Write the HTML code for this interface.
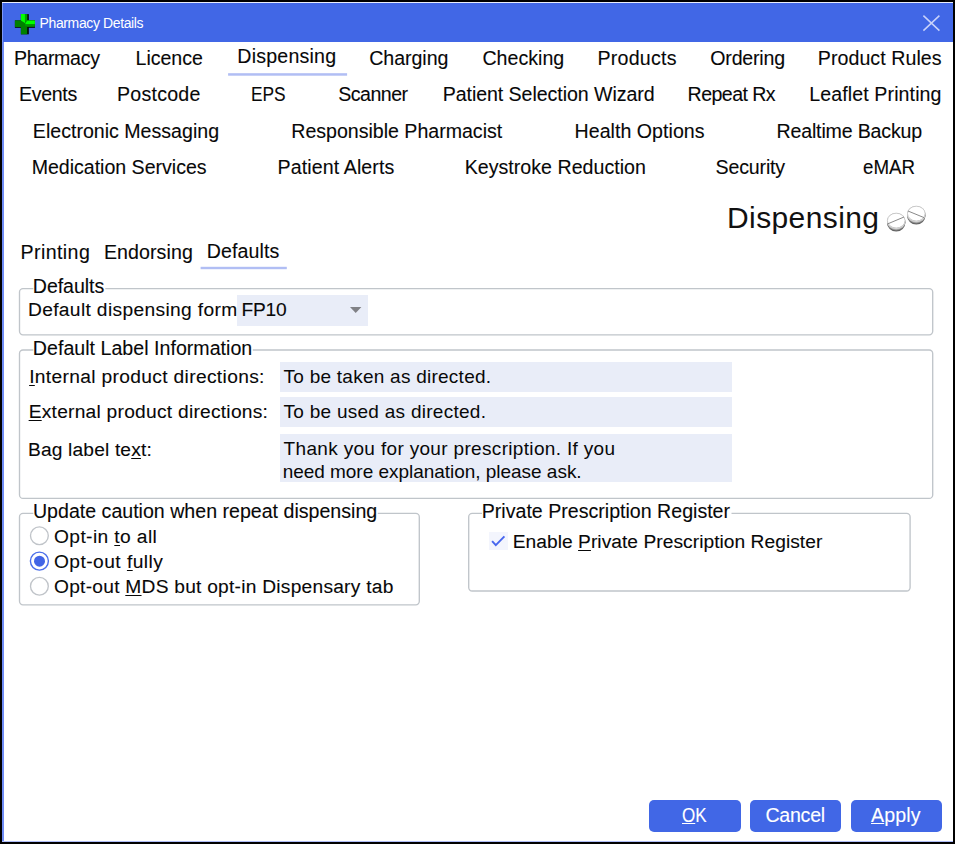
<!DOCTYPE html>
<html lang="en">
<head>
<meta charset="utf-8">
<title>Pharmacy Details</title>
<style>
html,body{margin:0;padding:0;}
body{width:955px;height:844px;overflow:hidden;background:#000;font-family:"Liberation Sans",sans-serif;position:relative;}
.abs{position:absolute;}
#win{position:absolute;left:2px;top:2px;width:951px;height:840px;background:#fff;}
#lb{position:absolute;left:2px;top:2px;width:2px;height:840px;background:#6f8cf5;}
#bb{position:absolute;left:2px;top:841px;width:951px;height:1px;background:#aebcf7;}
#titlebar{position:absolute;left:2px;top:2px;width:951px;height:39.5px;background:#4167e6;border-top:1px solid #e8ecfc;box-sizing:border-box;}
.t{position:absolute;margin:0;font-weight:400;white-space:pre;line-height:1;font-family:"Liberation Sans",sans-serif;-webkit-text-stroke:0.1px currentColor;}
#title,#head,#f1,#f2,#f3,#f4{-webkit-text-stroke:0;}
.t u{text-decoration:underline;text-decoration-thickness:1px;text-underline-offset:2px;}
.btn .t u{text-underline-offset:1px;}
.fld{position:absolute;background:#e9edf8;}
.btn{position:absolute;top:800px;height:31.5px;width:91.5px;margin:0;padding:0;border:0;background:#4167e6;border-radius:5px;font:inherit;text-align:left;overflow:visible;}
</style>
</head>
<body>
<!-- window frame -->
<div id="win"></div>
<div id="lb"></div>
<div id="bb"></div>

<!-- title bar -->
<header>
<div id="titlebar"></div>
<div class="abs" style="left:2px;top:3px;width:1px;height:39px;background:#7d98f6"></div>
<svg class="abs" style="left:12px;top:11px" width="26" height="26" viewBox="12 11 26 26" aria-hidden="true">
  <rect x="20.9" y="14.1" width="7.9" height="20.2" fill="#000800"/>
  <rect x="14.9" y="20.4" width="20.05" height="7.4" fill="#000800"/>
  <rect x="20.9" y="14.1" width="6.3" height="20.2" fill="#008000"/>
  <rect x="14.9" y="20.4" width="20.05" height="6.6" fill="#008000"/>
  <rect x="24.9" y="14.1" width="2.3" height="7.4" fill="#00a000"/>
  <rect x="25.2" y="24" width="9.75" height="1.7" fill="#009c00"/>
  <polygon points="20.9,14.1 24.9,14.1 24.9,21 25.3,23.3 20.9,20.4" fill="#00ff00"/>
  <polygon points="25.3,23.3 27.4,20.4 34.95,20.4 34.95,24.1 25.5,24.1" fill="#00ff00"/>
</svg>
<span class="t" id="title" style="left:39.56px;top:16.15px;font-size:14px;letter-spacing:-0.38px;color:#ffffff">Pharmacy Details</span>
<svg class="abs" style="left:921px;top:13px" width="20" height="20" viewBox="0 0 20 20" role="img" aria-label="Close">
  <path d="M2.4 2.6 L18.4 17.6 M18.4 2.6 L2.4 17.6" stroke="#c9d2fa" stroke-width="1.5" fill="none"/>
</svg>
</header>

<!-- line work: group boxes, selected-tab underlines, radio buttons -->
<svg class="abs" style="left:0;top:0" width="955" height="844" viewBox="0 0 955 844" aria-hidden="true">
  <g fill="none" stroke="#c0c5ca" stroke-width="1.35">
    <rect x="19.5" y="288.6" width="913.2" height="46.2" rx="3.5"/>
    <rect x="19.5" y="350" width="913.2" height="148.4" rx="3.5"/>
    <rect x="19.5" y="513.4" width="399.8" height="91.4" rx="3.5"/>
    <rect x="468.7" y="513.4" width="441.4" height="77.6" rx="3.5"/>
  </g>
  <g fill="#b1bef4">
    <rect x="228.1" y="73.2" width="119" height="2.5"/>
    <rect x="200.6" y="266.8" width="86.2" height="2.4"/>
  </g>
  <g fill="#ffffff">
    <rect x="33.3" y="286" width="72" height="5"/>
    <rect x="33.3" y="347" width="219.5" height="5"/>
    <rect x="33.3" y="511" width="344.5" height="5"/>
    <rect x="482" y="511" width="249.5" height="5"/>
  </g>
  <circle cx="39.4" cy="535.7" r="8.9" fill="#fff" stroke="#c0c4c9" stroke-width="1.35"/>
  <circle cx="39.4" cy="561.1" r="9" fill="#fff" stroke="#4a6eea" stroke-width="1.4"/>
  <circle cx="39.5" cy="561.2" r="5.5" fill="#4265e6"/>
  <circle cx="39.4" cy="586.2" r="8.9" fill="#fff" stroke="#c0c4c9" stroke-width="1.35"/>
</svg>

<!-- main tab strip -->
<nav role="tablist" aria-label="Pharmacy details">
<span class="t" id="t11" role="tab" aria-selected="false" style="left:14.05px;top:49.41px;font-size:19.6px;letter-spacing:-0.33px;color:#080808">Pharmacy</span>
<span class="t" id="t12" role="tab" aria-selected="false" style="left:135.56px;top:49.41px;font-size:19.6px;letter-spacing:-0.04px;color:#080808">Licence</span>
<span class="t" id="t13" role="tab" aria-selected="true" style="left:237.3px;top:47.41px;font-size:19.6px;letter-spacing:0.21px;color:#080808">Dispensing</span>
<span class="t" id="t14" role="tab" aria-selected="false" style="left:369.22px;top:49.41px;font-size:19.6px;letter-spacing:-0.05px;color:#080808">Charging</span>
<span class="t" id="t15" role="tab" aria-selected="false" style="left:482.4px;top:49.41px;font-size:19.6px;letter-spacing:0.02px;color:#080808">Checking</span>
<span class="t" id="t16" role="tab" aria-selected="false" style="left:597.56px;top:49.41px;font-size:19.6px;letter-spacing:0.23px;color:#080808">Products</span>
<span class="t" id="t17" role="tab" aria-selected="false" style="left:710.29px;top:49.41px;font-size:19.6px;letter-spacing:-0.2px;color:#080808">Ordering</span>
<span class="t" id="t18" role="tab" aria-selected="false" style="left:817.79px;top:49.41px;font-size:19.6px;letter-spacing:0.06px;color:#080808">Product Rules</span>
<span class="t" id="t21" role="tab" aria-selected="false" style="left:19.05px;top:85.41px;font-size:19.6px;letter-spacing:-0.35px;color:#080808">Events</span>
<span class="t" id="t22" role="tab" aria-selected="false" style="left:117.05px;top:85.41px;font-size:19.6px;letter-spacing:0.23px;color:#080808">Postcode</span>
<span class="t" id="t23" role="tab" aria-selected="false" style="left:251.36px;top:85.41px;font-size:19.6px;letter-spacing:0px;color:#080808;transform:scaleX(0.883);transform-origin:0 0">EPS</span>
<span class="t" id="t24" role="tab" aria-selected="false" style="left:338.34px;top:85.41px;font-size:19.6px;letter-spacing:-0.55px;color:#080808">Scanner</span>
<span class="t" id="t25" role="tab" aria-selected="false" style="left:442.74px;top:85.41px;font-size:19.6px;letter-spacing:-0.07px;color:#080808">Patient Selection Wizard</span>
<span class="t" id="t26" role="tab" aria-selected="false" style="left:687.61px;top:85.41px;font-size:19.6px;letter-spacing:-0.58px;color:#080808">Repeat Rx</span>
<span class="t" id="t27" role="tab" aria-selected="false" style="left:809.3px;top:85.41px;font-size:19.6px;letter-spacing:0.1px;color:#080808">Leaflet Printing</span>
<span class="t" id="t31" role="tab" aria-selected="false" style="left:32.84px;top:122.41px;font-size:19.6px;letter-spacing:0px;color:#080808">Electronic Messaging</span>
<span class="t" id="t32" role="tab" aria-selected="false" style="left:291.34px;top:122.41px;font-size:19.6px;letter-spacing:-0.02px;color:#080808">Responsible Pharmacist</span>
<span class="t" id="t33" role="tab" aria-selected="false" style="left:574.56px;top:122.41px;font-size:19.6px;letter-spacing:0.03px;color:#080808">Health Options</span>
<span class="t" id="t34" role="tab" aria-selected="false" style="left:776.49px;top:122.41px;font-size:19.6px;letter-spacing:-0.17px;color:#080808">Realtime Backup</span>
<span class="t" id="t41" role="tab" aria-selected="false" style="left:31.65px;top:158.41px;font-size:19.6px;letter-spacing:-0.02px;color:#080808">Medication Services</span>
<span class="t" id="t42" role="tab" aria-selected="false" style="left:277.56px;top:158.41px;font-size:19.6px;letter-spacing:0.1px;color:#080808">Patient Alerts</span>
<span class="t" id="t43" role="tab" aria-selected="false" style="left:464.72px;top:158.41px;font-size:19.6px;letter-spacing:0.02px;color:#080808">Keystroke Reduction</span>
<span class="t" id="t44" role="tab" aria-selected="false" style="left:715.58px;top:158.41px;font-size:19.6px;letter-spacing:-0.17px;color:#080808">Security</span>
<span class="t" id="t45" role="tab" aria-selected="false" style="left:863.16px;top:158.41px;font-size:19.6px;letter-spacing:0px;color:#080808;transform:scaleX(0.956);transform-origin:0 0">eMAR</span>
</nav>

<!-- page heading -->
<h1 class="t" id="head" style="left:727.03px;top:202.6px;font-size:30px;letter-spacing:0.39px;color:#111111">Dispensing</h1>
<svg class="abs" style="left:884px;top:203px" width="46" height="32" viewBox="0 0 46 32" aria-hidden="true">
  <ellipse cx="12.2" cy="19.8" rx="9.2" ry="8.6" fill="#626262"/>
  <ellipse cx="12.2" cy="19" rx="9.2" ry="8.5" fill="#8c8c8c"/>
  <ellipse cx="12.2" cy="18.4" rx="9.15" ry="8.3" fill="#b8b8b8"/>
  <ellipse cx="12.2" cy="17.9" rx="9.1" ry="8" fill="#e2e2e2"/>
  <ellipse cx="12.2" cy="17.6" rx="8.8" ry="7.4" fill="#fff" stroke="#c4c4c4" stroke-width="0.9"/>
  <path d="M3.4 21 L20 14" stroke="#7c7c7c" stroke-width="0.9"/>
  <ellipse cx="32.3" cy="12.8" rx="9.2" ry="8.6" fill="#626262"/>
  <ellipse cx="32.3" cy="12" rx="9.2" ry="8.5" fill="#8c8c8c"/>
  <ellipse cx="32.3" cy="11.4" rx="9.15" ry="8.3" fill="#b8b8b8"/>
  <ellipse cx="32.3" cy="10.9" rx="9.1" ry="8" fill="#e2e2e2"/>
  <ellipse cx="32.3" cy="10.6" rx="8.8" ry="7.4" fill="#fff" stroke="#c4c4c4" stroke-width="0.9"/>
  <path d="M24 8 L40 14.6" stroke="#7c7c7c" stroke-width="0.9"/>
</svg>

<!-- sub tab strip -->
<div role="tablist" aria-label="Dispensing">
<span class="t" id="s1" role="tab" aria-selected="false" style="left:20.61px;top:243.41px;font-size:19.6px;letter-spacing:0.39px;color:#080808">Printing</span>
<span class="t" id="s2" role="tab" aria-selected="false" style="left:103.93px;top:243.41px;font-size:19.6px;letter-spacing:0.08px;color:#080808">Endorsing</span>
<span class="t" id="s3" role="tab" aria-selected="true" style="left:206.72px;top:242.41px;font-size:19.6px;letter-spacing:0.1px;color:#080808">Defaults</span>
</div>

<main role="tabpanel">
<!-- group: Defaults -->
<section role="group" aria-labelledby="lg1">
<span class="t" id="lg1" style="left:32.84px;top:277.41px;font-size:19.6px;letter-spacing:-0.07px;color:#080808">Defaults</span>
<span class="t" id="l1" style="left:27.95px;top:299.75px;font-size:19.2px;letter-spacing:0.35px;color:#080808">Default dispensing form</span>
<div class="fld" role="combobox" style="left:237px;top:294.6px;width:131.4px;height:31.6px"></div>
<span class="t" id="l1v" style="left:241.41px;top:299.75px;font-size:19.2px;letter-spacing:-0.21px;color:#080808">FP10</span>
<svg class="abs" style="left:349px;top:305px" width="14" height="10" viewBox="0 0 14 10" aria-hidden="true"><polygon points="1,1.9 12.4,1.9 6.7,8" fill="#808186"/></svg>
</section>

<!-- group: Default Label Information -->
<section role="group" aria-labelledby="lg2">
<span class="t" id="lg2" style="left:32.85px;top:339.41px;font-size:19.6px;letter-spacing:0.02px;color:#080808">Default Label Information</span>
<span class="t" id="l2" style="left:29.13px;top:366.75px;font-size:19.2px;letter-spacing:0.34px;color:#080808"><u>I</u>nternal product directions:</span>
<div class="fld" style="left:279.7px;top:362px;width:452.5px;height:29.8px"></div>
<span class="t" id="f1" style="left:283.59px;top:366.92px;font-size:19px;letter-spacing:0.25px;color:#080808">To be taken as directed.</span>
<span class="t" id="l3" style="left:28.65px;top:401.75px;font-size:19.2px;letter-spacing:0.25px;color:#080808"><u>E</u>xternal product directions:</span>
<div class="fld" style="left:279.7px;top:397.3px;width:452.5px;height:29.6px"></div>
<span class="t" id="f2" style="left:283.52px;top:401.92px;font-size:19px;letter-spacing:0.27px;color:#080808">To be used as directed.</span>
<span class="t" id="l4" style="left:27.95px;top:439.75px;font-size:19.2px;letter-spacing:0.16px;color:#080808">Bag label te<u>x</u>t:</span>
<div class="fld" style="left:279.7px;top:434px;width:452.5px;height:48.3px"></div>
<span class="t" id="f3" style="left:283.59px;top:438.92px;font-size:19px;letter-spacing:0.33px;color:#080808">Thank you for your prescription. If you</span>
<span class="t" id="f4" style="left:282.65px;top:461.92px;font-size:19px;letter-spacing:-0.03px;color:#080808">need more explanation, please ask.</span>
</section>

<!-- group: Update caution when repeat dispensing -->
<section role="radiogroup" aria-labelledby="lg3">
<span class="t" id="lg3" style="left:32.96px;top:502.41px;font-size:19.6px;letter-spacing:-0px;color:#080808">Update caution when repeat dispensing</span>
<span class="t" id="r1" style="left:54px;top:526.75px;font-size:19.2px;letter-spacing:0.39px;color:#080808">Opt-in <u>t</u>o all</span>
<span class="t" id="r2" style="left:54px;top:551.75px;font-size:19.2px;letter-spacing:0.45px;color:#080808">Opt-out <u>f</u>ully</span>
<span class="t" id="r3" style="left:54.06px;top:576.75px;font-size:19.2px;letter-spacing:0.24px;color:#080808">Opt-out <u>M</u>DS but opt-in Dispensary tab</span>
</section>

<!-- group: Private Prescription Register -->
<section role="group" aria-labelledby="lg4">
<span class="t" id="lg4" style="left:481.77px;top:502.41px;font-size:19.6px;letter-spacing:-0px;color:#080808">Private Prescription Register</span>
<div class="abs" role="checkbox" aria-checked="true" style="left:489.3px;top:531.7px;width:18.5px;height:18.4px;background:#f3f5fd"></div>
<svg class="abs" style="left:488px;top:530px" width="22" height="22" viewBox="488 530 22 22" aria-hidden="true"><path d="M492.1 541.1 L495.8 545.2 L504.4 536.4" stroke="#4766ee" stroke-width="1.9" fill="none"/></svg>
<span class="t" id="c1" style="left:512.72px;top:531.75px;font-size:19.2px;letter-spacing:0.04px;color:#080808">Enable <u>P</u>rivate Prescription Register</span>
</section>
</main>

<!-- dialog buttons -->
<footer>
<button type="button" class="btn" style="left:649.2px"><span class="t" id="b1" style="left:32.49px;top:6.41px;font-size:19.6px;letter-spacing:0px;color:#ffffff;transform:scaleX(0.869);transform-origin:0 0"><u>O</u>K</span></button>
<button type="button" class="btn" style="left:749.9px"><span class="t" id="b2" style="left:15.5px;top:6.41px;font-size:19.6px;letter-spacing:-0.24px;color:#ffffff">Cancel</span></button>
<button type="button" class="btn" style="left:850.5px"><span class="t" id="b3" style="left:20.51px;top:6.41px;font-size:19.6px;letter-spacing:0.11px;color:#ffffff"><u>A</u>pply</span></button>
</footer>
</body>
</html>
